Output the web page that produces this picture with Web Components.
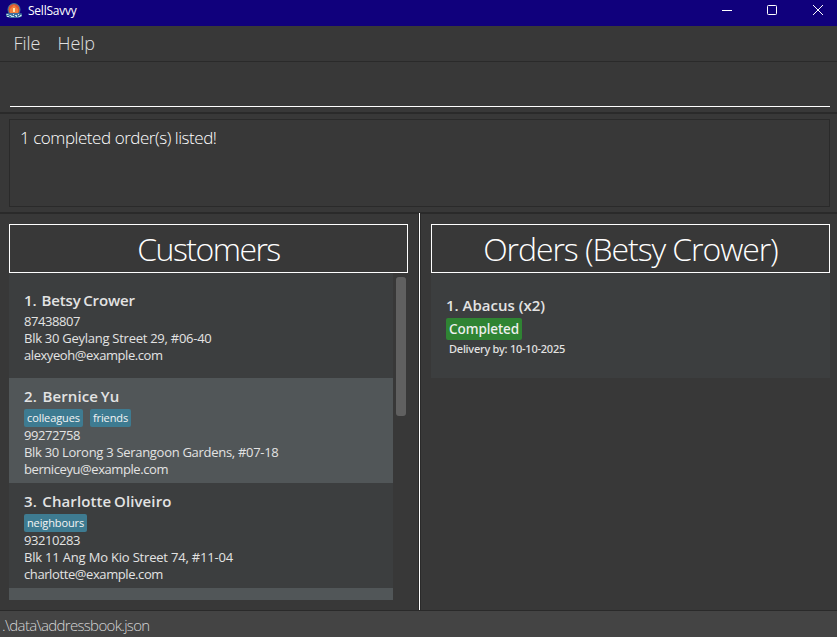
<!DOCTYPE html>
<html lang="en"><head><meta charset="utf-8"><title>SellSavvy</title>
<style>html,body{margin:0;height:100%;overflow:hidden;background:#383838}</style></head>
<body><sell-app></sell-app>
<script>
const define = (name, html, setup) => customElements.define(name, class extends HTMLElement {
  constructor() {
    super();
    this.attachShadow({mode: 'open'}).innerHTML = html;
  }
  connectedCallback() { if (setup) setup(this, this.shadowRoot); }
});

// One line of text; fitText() adjusts its tracking to fill the width given in "w".
define('ui-text', `<style>:host{display:block;white-space:pre}span{display:inline-block}</style><span><slot></slot></span>`);

define('title-bar', `<style>
:host{display:flex;flex:none;height:26px;background:#10007c;color:#fff;align-items:center;box-sizing:border-box;padding-left:6px;font-size:12px;line-height:22px}
.logo{margin:-5px 6px 0 0}ui-text{margin-top:-4px;flex:1}
.b{width:46px;display:flex;justify-content:center;margin-top:-6px}.b:last-child{margin-right:-4px}.min{width:44px}
</style>
<svg class="logo" width="16" height="16" viewBox="0 0 16 16"><circle cx="8" cy="6.6" r="6" fill="#e4572e" stroke="#387f9c" stroke-width="1"/><path d="M4 10V6l2-2 2-2 2 2 2 2v4z" fill="#f0803f"/><path d="M7 5h2v4H7z" fill="#ffe0a8"/><path d="M0 10.5l3-.4h10l3 .4v3l-4 1.5H4L0 13.5z" fill="#3d6f9f"/><path d="M.5 11.5h2M3.5 12.5h2M7 11.5h1M9 12.5h2M12 11.5h1M14 12.5h1.5M1 13.5h2M5 13.5h3M10 13.5h1M12.5 13.5h2" stroke="#c3e6e8" stroke-width="1"/></svg>
<ui-text w="48.5">SellSavvy</ui-text>
<span class="b min"><svg width="10" height="10"><path d="M0 5.5h10" stroke="#fff"/></svg></span>
<span class="b"><svg width="10" height="10"><rect x=".5" y=".5" width="9" height="9" rx=".8" fill="none" stroke="#fff"/></svg></span>
<span class="b"><svg width="10" height="10"><path d="M0 0l10 10M10 0L0 10" stroke="#fff"/></svg></span>`);

define('menu-bar', `<style>:host{display:flex;flex:none;height:36px;box-sizing:border-box;border-bottom:1px solid #2a2a2a;padding-left:13.5px;gap:17px;font:300 18px/35px var(--f);color:#e0e0e0}</style>
<ui-text w="27">File</ui-text><ui-text w="37.5">Help</ui-text>`);

define('command-box', `<style>:host{display:flex;flex:none;height:52px;box-sizing:border-box;border-bottom:2px solid #2a2a2a;padding:0 7px 5px 10px}div{flex:1;border-bottom:1px solid #fff}</style><div></div>`);

define('result-box', `<style>:host{display:flex;flex:none;height:100px;box-sizing:border-box;border-bottom:2px solid #2a2a2a;padding:5px 7px 5px 9px}
div{flex:1;border:1px solid #2a2a2a;padding:7px 10px;font:300 17px/22px var(--f);color:#fff}</style><div><slot></slot></div>`);

define('panel-head', `<style>:host{display:flex;justify-content:center;height:49px;box-sizing:border-box;border:1px solid #fff;font:300 32px/48px var(--f);color:#fff}</style><slot></slot>`);

define('tag-chip', `<style>:host{display:block;background:#3e7b91;border-radius:2px;padding:0 3px;font-size:11px;line-height:18px;height:18px;color:#f4f4f4}</style><slot></slot>`);

define('person-card', `<style>
:host{display:flex;flex-direction:column;justify-content:center;flex:none;height:105px;box-sizing:border-box;padding:8px 15px 5px;background:#3c3e3f;font-size:13px;line-height:17px;color:#e3e3e3}
:host([alt]){background:#515658}
.n{font-weight:600;font-size:15px;line-height:21px;word-spacing:-1.3px}
.t{display:flex;gap:7px;min-height:2px}::slotted(tag-chip){margin:2px 0 0}</style>
<div class="n"><slot name="name"></slot></div><div class="t"><slot name="tag"></slot></div><slot></slot>`);

define('order-card', `<style>
:host{display:block;height:105px;box-sizing:border-box;padding:22px 15px 0;background:#3c3e3f;color:#e3e3e3}
.n{font-weight:600;font-size:15px;line-height:21px}
.s{width:76px;height:22px;box-sizing:border-box;margin-top:2px;padding-left:3px;border-radius:2px;background:#2f8433;font:500 13.5px/22px "Noto Sans",sans-serif;color:#f0f0f0}
.d{padding-left:3px;font:500 11px/18px "Noto Sans",sans-serif}</style>
<div class="n"><slot name="name"></slot></div><div class="s"><slot name="status"></slot></div><div class="d"><slot></slot></div>`);

define('scroll-list', `<style>:host{display:flex;height:327px;gap:3px}.l{width:384px;display:flex;flex-direction:column;overflow:hidden}
.b{width:10px;height:139px;margin-top:4px;border-radius:3px;background:#606060}</style><div class="l"><slot></slot></div><div class="b"></div>`);

define('sell-app', `<style>
:host{--f:"Open Sans","Noto Sans",sans-serif;display:flex;flex-direction:column;height:637px;background:#383838;font-family:var(--f);font-size:13px}
.m{display:grid;grid-template-columns:419px 1px 1fr;height:396px;flex:none}
.l{padding:10px 11px 0 9px}.r{padding:10px 7px 0 11px}.v{background:#fff;margin-top:-1px;outline:1px solid #2a2a2a;clip-path:inset(0 -1px)}
.f{flex:none;height:27px;box-sizing:border-box;border-top:1px solid #2a2a2a;background:#444;padding-left:2px;font:300 15px/29px var(--f);color:#d5d5d5}
.l person-card:last-child{height:12px;min-height:0;padding:0}
</style>
<title-bar></title-bar><menu-bar></menu-bar><command-box></command-box>
<result-box><ui-text w="196.5">1 completed order(s) listed!</ui-text></result-box>
<div class="m"><section class="l"><panel-head><ui-text w="142.5">Customers</ui-text></panel-head>
<scroll-list>
<person-card><ui-text slot="name" w="111">1.  Betsy Crower</ui-text><ui-text w="56">87438807</ui-text><ui-text w="187.5">Blk 30 Geylang Street 29, #06-40</ui-text><ui-text w="138.5">alexyeoh@example.com</ui-text></person-card>
<person-card alt><ui-text slot="name" w="95.5">2.  Bernice Yu</ui-text><tag-chip slot="tag"><ui-text w="53">colleagues</ui-text></tag-chip><tag-chip slot="tag"><ui-text w="35">friends</ui-text></tag-chip><ui-text w="56">99272758</ui-text><ui-text w="254.5">Blk 30 Lorong 3 Serangoon Gardens, #07-18</ui-text><ui-text w="144">berniceyu@example.com</ui-text></person-card>
<person-card><ui-text slot="name" w="147.5">3.  Charlotte Oliveiro</ui-text><tag-chip slot="tag"><ui-text w="57">neighbours</ui-text></tag-chip><ui-text w="56">93210283</ui-text><ui-text w="209">Blk 11 Ang Mo Kio Street 74, #11-04</ui-text><ui-text w="139">charlotte@example.com</ui-text></person-card>
<person-card alt></person-card>
</scroll-list></section><div class="v"></div>
<section class="r"><panel-head><ui-text w="294.5">Orders (Betsy Crower)</ui-text></panel-head>
<order-card><ui-text slot="name" w="99">1. Abacus (x2)</ui-text><ui-text slot="status" w="70">Completed</ui-text><ui-text w="116">Delivery by: 10-10-2025</ui-text></order-card></section></div>
<div class="f"><ui-text w="147.5">.\\data\\addressbook.json</ui-text></div>`);

const fitText = root => root.querySelectorAll('*').forEach(e => {
  if (e.localName === 'ui-text') {
    const s = e.shadowRoot.querySelector('span');
    s.style.letterSpacing = (e.getAttribute('w') - s.getBoundingClientRect().width) / e.textContent.length + 'px';
  }
  if (e.shadowRoot) fitText(e.shadowRoot);
});
fitText(document);
</script></body></html>
